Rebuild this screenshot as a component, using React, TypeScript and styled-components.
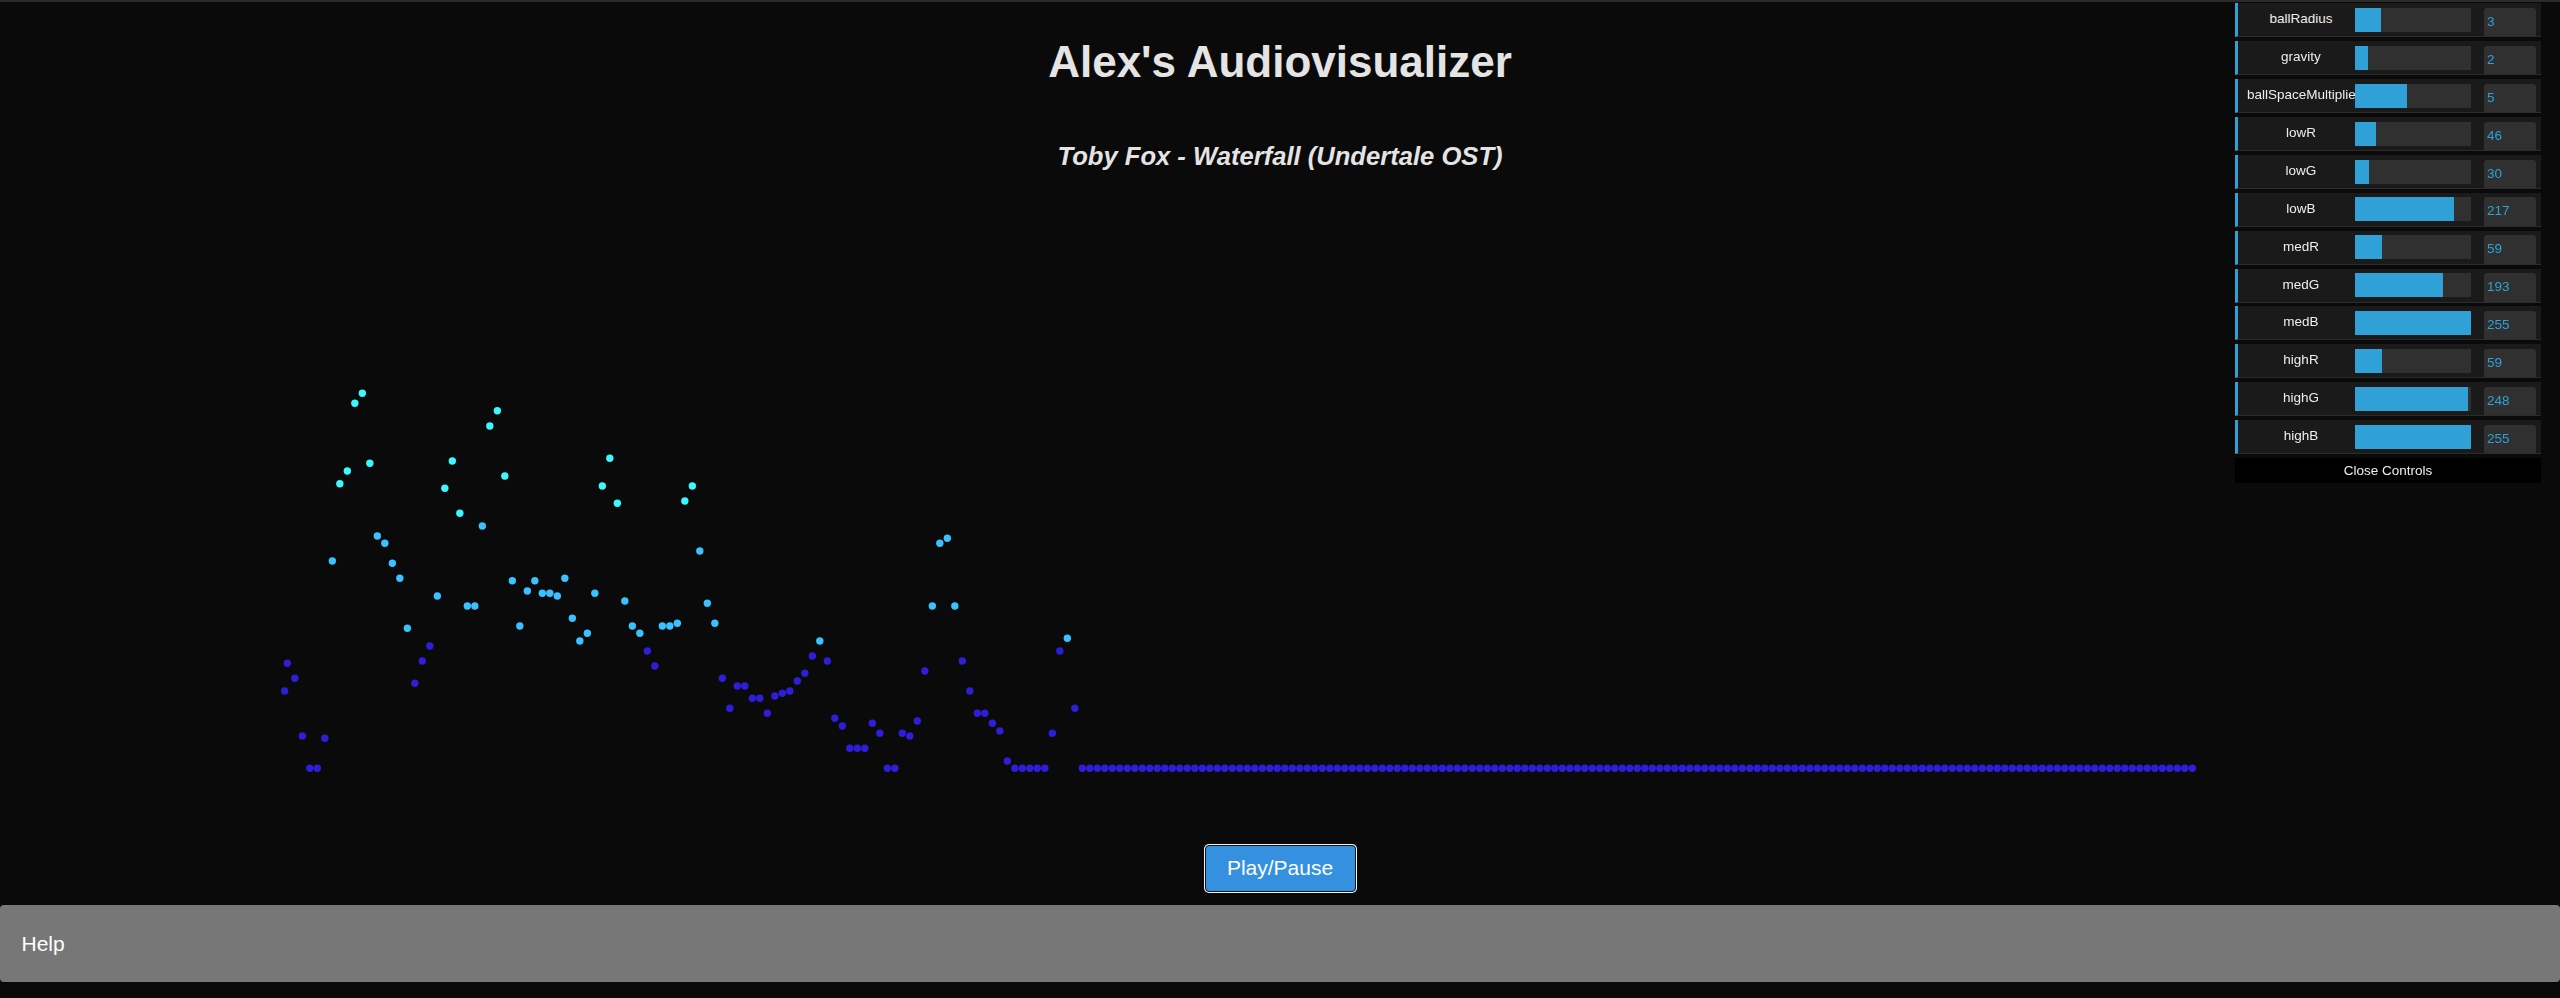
import styled, { createGlobalStyle } from "styled-components";

const GlobalStyle = createGlobalStyle`
  html, body {
    margin: 0;
    padding: 0;
    background-color: #0a0a0a;
  }
  body {
    font-family: "Liberation Sans", Arial, sans-serif;
    overflow: hidden;
  }
`;

// bar colours, same as the low/med/high sliders
const LOW = "rgb(46, 30, 217)";
const MED = "rgb(59, 193, 255)";
const HIGH = "rgb(59, 248, 255)";

const FLOOR = 768.3;
const BINS = 255;
const START_X = 287.33;
const SPACING = 7.5;

// ball heights (page y) for the first bins, the rest sit on the floor
const peaks = [
  663.3, 678.3, 736, 768.3, 768.3, 738.3, 561, 483.7, 471, 403.3, 393.3, 463.3,
  536, 543.3, 563.3, 578.3, 628.3, 683.3, 661, 646, 596, 488.3, 461, 513.3, 606,
  606, 526, 426, 410.7, 476, 580.7, 626, 591, 580.7, 593.3, 593.3, 596, 578.3,
  618.3, 641, 633.3, 593.3, 486, 458.3, 503.3, 601, 626, 633.3, 651, 666, 626,
  626, 623.3, 501, 486, 551, 603.3, 623.3, 678.3, 708.3, 686, 686, 698.3, 698.3,
  713.3, 696, 693.3, 691, 681, 673.3, 656, 641, 661, 718.3, 726, 748.3, 748.3,
  748.3, 723.3, 733.3, 768.3, 768.3, 733.3, 736, 721, 671, 606, 543.3, 538.3,
  606, 661, 691, 713.3, 713.3, 723.3, 731, 761, 768.3, 768.3, 768.3, 768.3,
  768.3, 733.3, 651, 638.3, 708.3,
];

const colorFor = (y: number) => (y < 520 ? HIGH : y < 645 ? MED : LOW);

const controls = [
  { name: "ballRadius", value: 3, min: 1, max: 10 },
  { name: "gravity", value: 2, min: 1, max: 10 },
  { name: "ballSpaceMultiplier", value: 5, min: 1, max: 10 },
  { name: "lowR", value: 46, min: 0, max: 255 },
  { name: "lowG", value: 30, min: 0, max: 255 },
  { name: "lowB", value: 217, min: 0, max: 255 },
  { name: "medR", value: 59, min: 0, max: 255 },
  { name: "medG", value: 193, min: 0, max: 255 },
  { name: "medB", value: 255, min: 0, max: 255 },
  { name: "highR", value: 59, min: 0, max: 255 },
  { name: "highG", value: 248, min: 0, max: 255 },
  { name: "highB", value: 255, min: 0, max: 255 },
];

const Visualizer = () => {
  const levels = Array.from({ length: BINS }, (_, i) => peaks[i] ?? FLOOR);
  return (
    <Canvas viewBox="0 171 2560 674" preserveAspectRatio="none">
      <circle cx={284.67} cy={691} r={3.7} fill={LOW} />
      {levels.map((y, i) => (
        <circle
          key={i}
          cx={START_X + i * SPACING}
          cy={y}
          r={3.7}
          fill={colorFor(y)}
        />
      ))}
    </Canvas>
  );
};

const Controls = () => {
  return (
    <Panel>
      {controls.map((c) => {
        const pct = ((c.value - c.min) / (c.max - c.min)) * 100;
        return (
          <Row key={c.name}>
            <Label>{c.name}</Label>
            <Slider>
              <span style={{ width: `${pct}%` }} />
            </Slider>
            <NumberBox>{c.value}</NumberBox>
          </Row>
        );
      })}
      <CloseButton>Close Controls</CloseButton>
    </Panel>
  );
};

const App = () => {
  return (
    <Page>
      <GlobalStyle />
      <Title>Alex's Audiovisualizer</Title>
      <SongTitle>Toby Fox - Waterfall (Undertale OST)</SongTitle>
      <Visualizer />
      <PlayButton>Play/Pause</PlayButton>
      <HelpBar>Help</HelpBar>
      <Controls />
    </Page>
  );
};

const Page = styled.div`
  display: flex;
  flex-direction: column;
  align-items: center;
  width: 2560px;
  height: 998px;
  box-sizing: border-box;
  border-top: 2px solid #2b2b2b;
  background-color: #0a0a0a;
  text-align: center;
`;

const Title = styled.h1`
  margin: 33.8px 0 0;
  font-size: 44px;
  line-height: 52px;
  font-weight: 700;
  color: #e4e4e4;
`;

const SongTitle = styled.h3`
  margin: 53.2px 0 0;
  font-size: 25.6px;
  line-height: 30px;
  font-weight: 700;
  font-style: italic;
  color: #e4e4e4;
`;

const Canvas = styled.svg`
  display: block;
  width: 2560px;
  height: 674px;
  flex-shrink: 0;
`;

const PlayButton = styled.button`
  width: 151px;
  height: 47px;
  flex-shrink: 0;
  box-sizing: border-box;
  background-color: #3590e0;
  color: #ffffff;
  border: 1.5px solid #121212;
  border-radius: 4px;
  box-shadow: 0 0 0 1px #f4f4f4;
  font-family: "Liberation Sans", Arial, sans-serif;
  font-size: 21px;
  padding: 0;
  cursor: pointer;
`;

const HelpBar = styled.button`
  margin-top: 13.5px;
  width: 2560px;
  height: 77px;
  flex-shrink: 0;
  box-sizing: border-box;
  padding: 0 21.5px;
  background-color: #777777;
  color: #ffffff;
  border: none;
  border-radius: 4px;
  text-align: left;
  font-family: "Liberation Sans", Arial, sans-serif;
  font-size: 21px;
  cursor: pointer;
`;

const Panel = styled.div`
  position: fixed;
  top: 0;
  right: 19px;
  width: 306px;
  padding-top: 3.3px;
  font-family: "Liberation Sans", Arial, sans-serif;
  font-size: 13.5px;
`;

const Row = styled.div`
  display: flex;
  align-items: flex-start;
  height: 34px;
  box-sizing: border-box;
  margin-bottom: 3.9px;
  background-color: #1a1a1a;
  border-left: 3px solid #2fa1d6;
  border-bottom: 1px solid #2c2c2c;
  padding-right: 5px;
`;

const Label = styled.div`
  width: 117px;
  flex-shrink: 0;
  box-sizing: border-box;
  padding-left: 9px;
  height: 33px;
  line-height: 32px;
  overflow: hidden;
  white-space: nowrap;
  text-align: center;
  color: #eeeeee;
`;

const Slider = styled.div`
  width: 116px;
  height: 24px;
  margin-top: 4.7px;
  flex-shrink: 0;
  background-color: #303030;
  display: flex;

  span {
    display: block;
    height: 100%;
    background-color: #2fa1d6;
  }
`;

const NumberBox = styled.div`
  margin-left: 13px;
  margin-top: 4.7px;
  width: 52px;
  height: 28.3px;
  box-sizing: border-box;
  padding: 5px 3px 0;
  background-color: #303030;
  border-radius: 3px 3px 0 0;
  color: #2fa1d6;
  text-align: left;
  line-height: 18px;
`;

const CloseButton = styled.div`
  height: 25px;
  line-height: 25px;
  background-color: #000000;
  color: #eeeeee;
  text-align: center;
`;

export default App;
